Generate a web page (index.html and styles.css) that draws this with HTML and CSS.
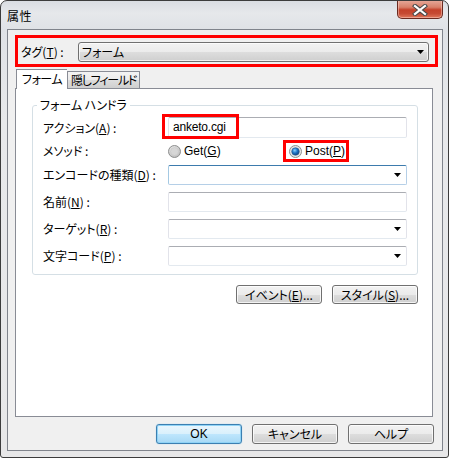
FILE: index.html
```html
<!DOCTYPE html>
<html lang="ja">
<head>
<meta charset="utf-8">
<title>属性</title>
<link rel="stylesheet" href="styles.css">
</head>
<body>
<div class="window">
  <div class="titlebar">
    <span class="title">属性</span>
    <div class="close">
      <svg width="16" height="12" viewBox="0 0 16 12">
        <path d="M3 2 L13 10 M13 2 L3 10" stroke="#4a4a4a" stroke-width="4.2" stroke-linecap="square"/>
        <path d="M3 2 L13 10 M13 2 L3 10" stroke="#ffffff" stroke-width="2.2" stroke-linecap="square"/>
      </svg>
    </div>
  </div>
  <div class="client">
    <div class="tagbox">
      <span class="taglabel">タグ(<u>T</u>) :</span>
      <div class="btncombo">
        <span>フォーム</span>
        <svg class="arrow" width="7" height="4" viewBox="0 0 7 4"><polygon points="0,0 7,0 3.5,4" fill="#000"/></svg>
      </div>
    </div>
    <div class="tabs">
      <div class="tab active">フォーム</div>
      <div class="tab second">隠しフィールド</div>
    </div>
    <div class="panel">
      <fieldset class="group">
        <legend>フォーム ハンドラ</legend>
        <div class="row r-action">
          <span class="lbl">アクション(<u>A</u>) :</span>
          <div class="field">
            <div class="textbox">anketo.cgi</div>
            <div class="mark mark-action"></div>
          </div>
        </div>
        <div class="row r-method">
          <span class="lbl">メソッド :</span>
          <div class="field radios">
            <label class="radio get">
              <svg width="13" height="13" viewBox="0 0 13 13">
                <defs>
                  <radialGradient id="rg" cx="0.4" cy="0.35" r="0.7">
                    <stop offset="0" stop-color="#f4f4f4"/>
                    <stop offset="1" stop-color="#b9b9b9"/>
                  </radialGradient>
                </defs>
                <circle cx="6.5" cy="6.5" r="6" fill="url(#rg)" stroke="#8e8f8f"/>
                <circle cx="6.5" cy="6.5" r="4" fill="#d6d6d6" stroke="#c4c4c4" stroke-width="0.6"/>
              </svg>
              <span>Get(<u>G</u>)</span>
            </label>
            <label class="radio post">
              <svg width="13" height="13" viewBox="0 0 13 13">
                <defs>
                  <radialGradient id="rb" cx="0.4" cy="0.35" r="0.7">
                    <stop offset="0" stop-color="#8cd3ff"/>
                    <stop offset="0.5" stop-color="#1d72c4"/>
                    <stop offset="1" stop-color="#0d3d7a"/>
                  </radialGradient>
                </defs>
                <circle cx="6.5" cy="6.5" r="6" fill="#e6e6e6" stroke="#8e8f8f"/>
                <circle cx="6.5" cy="6.5" r="3.8" fill="url(#rb)" stroke="#2b5b8c" stroke-width="0.6"/>
              </svg>
              <span>Post(<u>P</u>)</span>
            </label>
            <div class="mark mark-post"></div>
          </div>
        </div>
        <div class="row r-encode">
          <span class="lbl">エンコードの種類(<u>D</u>) :</span>
          <div class="field">
            <div class="combo focused">
              <svg class="arrow" width="7" height="4" viewBox="0 0 7 4"><polygon points="0,0 7,0 3.5,4" fill="#000"/></svg>
            </div>
          </div>
        </div>
        <div class="row">
          <span class="lbl">名前(<u>N</u>) :</span>
          <div class="field"><div class="textbox"></div></div>
        </div>
        <div class="row">
          <span class="lbl">ターゲット(<u>R</u>) :</span>
          <div class="field">
            <div class="combo">
              <svg class="arrow" width="7" height="4" viewBox="0 0 7 4"><polygon points="0,0 7,0 3.5,4" fill="#000"/></svg>
            </div>
          </div>
        </div>
        <div class="row">
          <span class="lbl">文字コード(<u>P</u>) :</span>
          <div class="field">
            <div class="combo">
              <svg class="arrow" width="7" height="4" viewBox="0 0 7 4"><polygon points="0,0 7,0 3.5,4" fill="#000"/></svg>
            </div>
          </div>
        </div>
      </fieldset>
      <div class="panelbtns">
        <div class="btn">イベント(<u>E</u>)...</div>
        <div class="btn">スタイル(<u>S</u>)...</div>
      </div>
    </div>
    <div class="dlgbtns">
      <div class="btn default">OK</div>
      <div class="btn">キャンセル</div>
      <div class="btn">ヘルプ</div>
    </div>
  </div>
</div>
</body>
</html>
```
FILE: styles.css
```css
* { box-sizing: border-box; }
html, body { margin: 0; padding: 0; background: #ffffff; }
body {
  font-family: "Noto Sans CJK JP", "Noto Sans", sans-serif;
  font-size: 12px;
  font-feature-settings: "palt";
  color: #000;
}
u { text-decoration: underline; text-underline-offset: 1px; }

.window {
  width: 449px;
  height: 458px;
  border: 1px solid #3c3c3c;
  border-radius: 7px 7px 3px 3px;
  background: linear-gradient(180deg, #d9dde2 0px, #e6e8eb 12px, #dfe2e6 28px, #e8e9eb 120px, #e7e7e8 100%);
  display: flex;
  flex-direction: column;
  overflow: hidden;
}

.titlebar {
  height: 28px;
  flex: none;
  display: flex;
  justify-content: space-between;
  align-items: flex-start;
  padding-left: 6px;
  padding-right: 5px;
}
.title {
  line-height: 14px;
  margin-top: 8px;
  font-size: 12px;
  letter-spacing: 0.5px;
}
.close {
  width: 46px;
  height: 19px;
  margin-top: -1px;
  border: 1px solid #6a2a20;
  border-top: none;
  border-radius: 0 0 5px 5px;
  background: linear-gradient(180deg, #e7ab9c 0%, #d8806a 40%, #c4412a 55%, #c64a33 75%, #e0775b 100%);
  box-shadow: inset 0 0 0 1px rgba(255, 220, 210, 0.45);
  display: flex;
  align-items: center;
  justify-content: center;
}
.close svg { margin-top: 1px; }

.client {
  flex: none;
  height: 422px;
  margin: 0 5px 0 6px;
  border: 1px solid #80848c;
  background: #f0f0f0;
  display: flex;
  flex-direction: column;
}

.tagbox {
  margin: 5px 4px 0 7px;
  height: 32px;
  border: 3px solid #ff0000;
  display: flex;
  align-items: center;
  padding: 2px 6px 0 3px;
}
.taglabel {
  width: 57px;
  flex: none;
  line-height: 14px;
}
.btncombo {
  flex: 1;
  height: 20px;
  border: 1px solid #707070;
  border-radius: 3px;
  background: linear-gradient(180deg, #f2f2f2 0%, #ebebeb 50%, #dddddd 51%, #cfcfcf 100%);
  box-shadow: inset 0 0 0 1px rgba(255, 255, 255, 0.7);
  display: flex;
  align-items: center;
  justify-content: space-between;
  padding: 0 4px 0 3px;
  line-height: 14px;
}

.tabs {
  margin: 2px 0 -1px 8px;
  height: 20px;
  display: flex;
  align-items: flex-end;
  position: relative;
  z-index: 1;
}
.tab {
  height: 17px;
  border: 1px solid #898c95;
  border-bottom: none;
  padding: 0 3px;
  line-height: 15px;
  background: linear-gradient(180deg, #f3f3f3 0%, #ebebeb 50%, #dddddd 51%, #cfcfcf 100%);
  margin-bottom: 1px;
  white-space: nowrap;
}
.tab.active {
  width: 51px;
  height: 20px;
  background: #ffffff;
  padding: 0 0 0 5px;
  line-height: 18px;
  margin-bottom: 0;
  border-right: none;
  letter-spacing: -0.5px;
}
.tab.second {
  width: 73px;
  letter-spacing: -1.2px;
  overflow: hidden;
}

.panel {
  margin: 0 9px 0 7px;
  height: 329px;
  border: 1px solid #898c95;
  background: #ffffff;
  display: flex;
  flex-direction: column;
}

.group {
  margin: 9px 14px 0 16px;
  padding: 5px 10px 8px 10px;
  border: 1px solid #d5dfe5;
  border-radius: 3px;
  min-width: 0;
}
.group legend {
  margin-left: -6px;
  padding: 0 3px;
  line-height: 14px;
}

.row {
  height: 20px;
  margin-top: 7px;
  display: grid;
  grid-template-columns: 125px 1fr;
  align-items: center;
}
.row.r-action { height: 21px; margin-top: 0; }
.row.r-method { margin-top: 3px; }
.row.r-encode { margin-top: 4px; }
.lbl { line-height: 14px; white-space: nowrap; }
.field { position: relative; height: 100%; }

.textbox {
  height: 100%;
  border: 1px solid #e2e3ea;
  border-top-color: #abadb3;
  border-bottom-color: #e3e9ef;
  background: #fff;
  border-radius: 2px;
  padding: 0 4px;
  line-height: 18px;
  font-family: "Liberation Sans", "Noto Sans CJK JP", sans-serif;
  letter-spacing: -0.2px;
}
.combo {
  height: 100%;
  border: 1px solid #e2e3ea;
  border-top-color: #abadb3;
  border-bottom-color: #e3e9ef;
  border-radius: 2px;
  background: #fff;
  display: flex;
  align-items: center;
  justify-content: flex-end;
  padding-right: 5px;
}
.combo.focused {
  border-color: #b5cfe7;
  border-top-color: #3d7bad;
  border-left-color: #a4c9e3;
}
.arrow { display: block; }

.radios {
  display: flex;
  align-items: center;
}
.radio {
  display: flex;
  align-items: center;
  gap: 3px;
  line-height: 14px;
  font-family: "Liberation Sans", "Noto Sans CJK JP", sans-serif;
}
.radio svg { display: block; }
.radio.get { width: 121px; }

.mark {
  position: absolute;
  border: 3px solid #ff0000;
  pointer-events: none;
}
.mark-action { left: -6px; top: -3px; width: 77px; height: 25px; }
.mark-post { left: 115px; top: -1px; width: 66px; height: 22px; }

.panelbtns {
  margin: 10px 14px 0 0;
  display: flex;
  justify-content: flex-end;
  gap: 10px;
}
.btn {
  width: 86px;
  height: 19px;
  border: 1px solid #707070;
  border-radius: 3px;
  background: linear-gradient(180deg, #f2f2f2 0%, #ebebeb 50%, #dddddd 51%, #cfcfcf 100%);
  box-shadow: inset 0 0 0 1px rgba(255, 255, 255, 0.75);
  display: flex;
  align-items: center;
  justify-content: center;
  line-height: 14px;
  white-space: nowrap;
}
.dlgbtns {
  margin: 7px 8px 0 0;
  display: flex;
  justify-content: flex-end;
  gap: 10px;
}
.dlgbtns .btn { height: 20px; }
.btn.default {
  border-color: #3c7fb1;
  background: linear-gradient(180deg, #eaf6fd 0%, #d9f0fc 50%, #bee6fd 51%, #a7d9f5 100%);
  box-shadow: inset 0 0 0 1px #8fd3f6, 0 0 1px #6fc3f0;
  font-family: "Liberation Sans", "Noto Sans CJK JP", sans-serif;
}
```
